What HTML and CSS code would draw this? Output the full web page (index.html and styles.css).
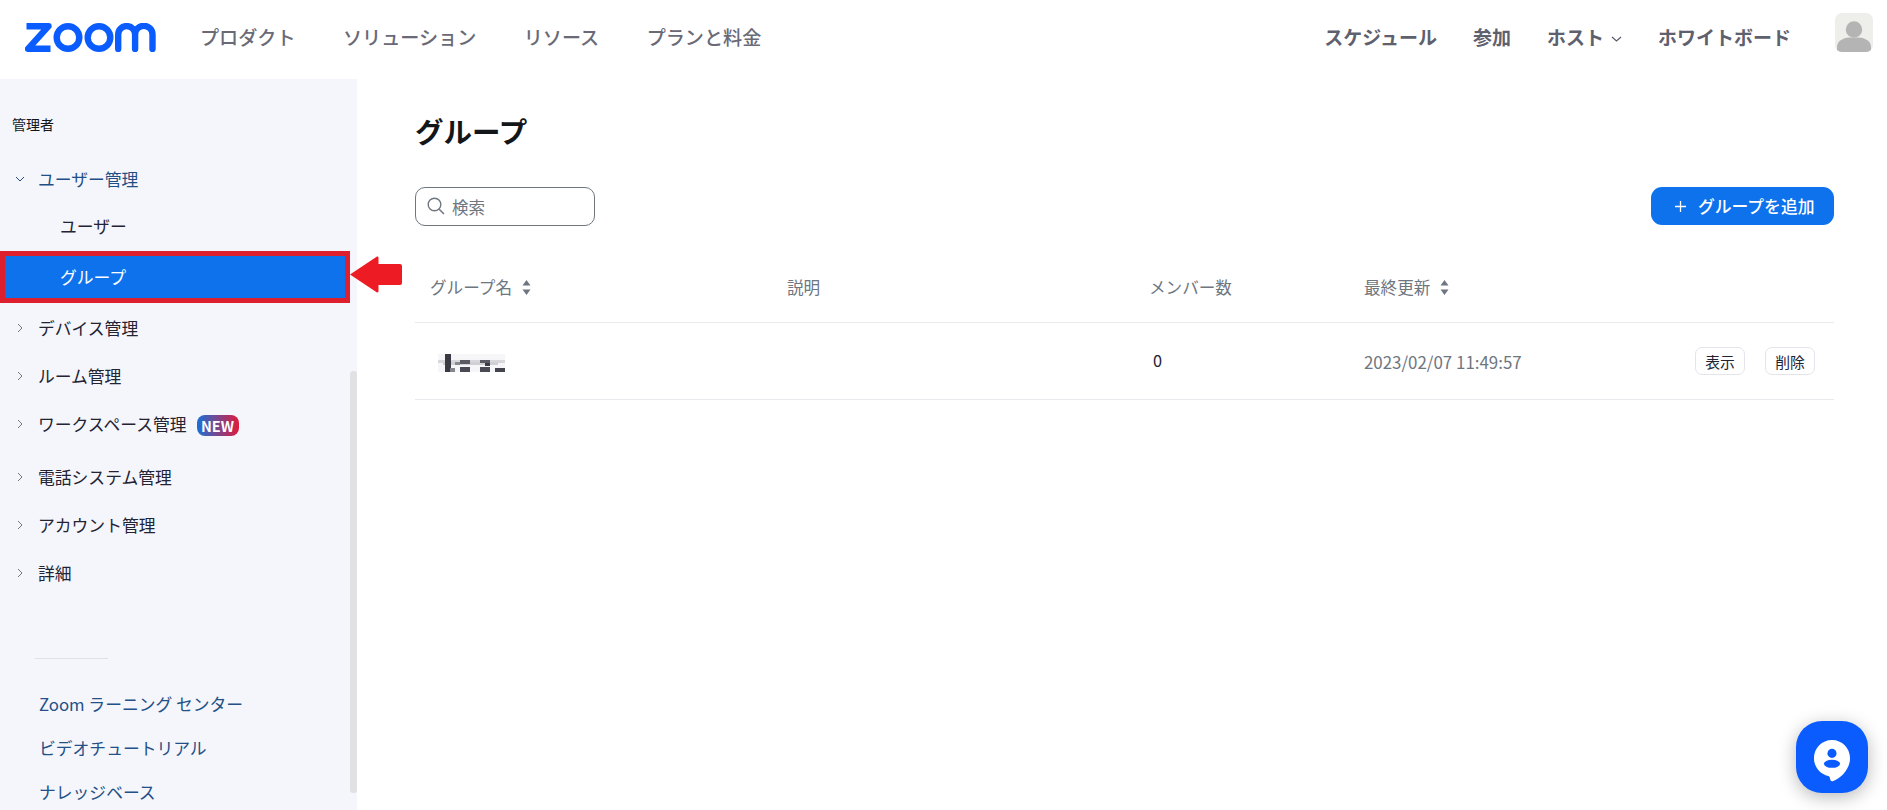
FILE: index.html
```html
<!DOCTYPE html>
<html lang="ja">
<head>
<meta charset="utf-8">
<title>グループ - Zoom</title>
<link rel="stylesheet" href="styles.css">
</head>
<body>
<header class="topbar">
  <svg class="logo" viewBox="0 0 131 29" aria-label="zoom">
    <g fill="none" stroke="#0b5cff" stroke-width="6.4">
      <path d="M1.5 3.2H23.5L3 25.8H25.5" stroke-linejoin="round"/>
      <circle cx="43" cy="14.5" r="11.3"/>
      <circle cx="74" cy="14.5" r="11.3"/>
      <path d="M93.2 26V11.5a8.4 8.4 0 0 1 16.9 0V26M110.1 11.5a8.4 8.4 0 0 1 17.4 0V26" stroke-linecap="round"/>
    </g>
  </svg>
  <nav class="nav-left">
    <a>プロダクト</a><a>ソリューション</a><a>リソース</a><a>プランと料金</a>
  </nav>
  <nav class="nav-right">
    <a>スケジュール</a><a>参加</a>
    <a class="has-caret">ホスト<svg class="caret" viewBox="0 0 11 6"><path d="M1 1l4.5 4L10 1" fill="none" stroke="#5a5b6a" stroke-width="1.2"/></svg></a>
    <a>ホワイトボード</a>
  </nav>
  <div class="avatar">
    <svg viewBox="0 0 38 39"><circle cx="19" cy="16.5" r="8.2" fill="#b4b4b4"/><path d="M2 39v-5c0-6 6-9 12-9.500h10c6 .5 12 3.500 12 9.500v5z" fill="#b4b4b4"/></svg>
  </div>
</header>

<div class="page">
  <aside class="sidebar">
    <div class="side-title">管理者</div>
    <ul class="menu">
      <li class="menu-item open"><svg class="chev" viewBox="0 0 10 10"><path d="M1 3l4 4 4-4" fill="none" stroke="#1f4f85" stroke-width="1"/></svg>ユーザー管理</li>
      <li class="sub-item">ユーザー</li>
      <li class="sub-item active">グループ
        <svg class="callout" viewBox="0 0 52 37"><path d="M0 18.500L27 .5q1.500-.5 1.500 1V8H50q2 0 2 2v17q0 2-2 2H28.500v6.500q0 1-1.500 1z" fill="#ed1c24"/></svg>
      </li>
      <li class="menu-item first-after"><svg class="chev" viewBox="0 0 10 10"><path d="M3 1l4 4-4 4" fill="none" stroke="#6e7680" stroke-width="1"/></svg>デバイス管理</li>
      <li class="menu-item"><svg class="chev" viewBox="0 0 10 10"><path d="M3 1l4 4-4 4" fill="none" stroke="#6e7680" stroke-width="1"/></svg>ルーム管理</li>
      <li class="menu-item"><svg class="chev" viewBox="0 0 10 10"><path d="M3 1l4 4-4 4" fill="none" stroke="#6e7680" stroke-width="1"/></svg>ワークスペース管理<span class="badge">NEW</span></li>
      <li class="menu-item spaced"><svg class="chev" viewBox="0 0 10 10"><path d="M3 1l4 4-4 4" fill="none" stroke="#6e7680" stroke-width="1"/></svg>電話システム管理</li>
      <li class="menu-item"><svg class="chev" viewBox="0 0 10 10"><path d="M3 1l4 4-4 4" fill="none" stroke="#6e7680" stroke-width="1"/></svg>アカウント管理</li>
      <li class="menu-item"><svg class="chev" viewBox="0 0 10 10"><path d="M3 1l4 4-4 4" fill="none" stroke="#6e7680" stroke-width="1"/></svg>詳細</li>
    </ul>
    <div class="side-rule"></div>
    <ul class="links">
      <li>Zoom ラーニング センター</li>
      <li>ビデオチュートリアル</li>
      <li>ナレッジベース</li>
    </ul>
    <div class="scroll-thumb"></div>
  </aside>

  <main class="content">
    <h1 class="title">グループ</h1>
    <div class="toolbar">
      <label class="search">
        <svg class="search-icon" viewBox="0 0 18 18"><circle cx="7.500" cy="7.500" r="6.300" fill="none" stroke="#6e7680" stroke-width="1.400"/><path d="M12.200 12.200L17 17" stroke="#6e7680" stroke-width="1.500"/></svg>
        <span>検索</span>
      </label>
      <button class="add-btn"><svg class="plus" viewBox="0 0 11 11"><path d="M5.500 0v11M0 5.500h11" stroke="#fff" stroke-width="1.300"/></svg>グループを追加</button>
    </div>
    <div class="row head">
      <div class="cell">グループ名<svg class="sort" viewBox="0 0 9 15"><path d="M4.500 0L8.500 5.500H.5zM4.500 15L.5 9.500H8.500z" fill="#6e7680"/></svg></div>
      <div class="cell">説明</div>
      <div class="cell">メンバー数</div>
      <div class="cell">最終更新<svg class="sort" viewBox="0 0 9 15"><path d="M4.500 0L8.500 5.500H.5zM4.500 15L.5 9.500H8.500z" fill="#6e7680"/></svg></div>
      <div class="cell"></div>
    </div>
    <div class="row body">
      <div class="cell">
        <svg class="mosaic" viewBox="0 0 67 19" role="img" aria-label="redacted">
          <rect x="0" y="0" width="67" height="18" fill="#f6f6f9"/>
          <rect x="0" y="6" width="67" height="3" fill="#d8d8dc"/>
          <rect x="5" y="8" width="55" height="3" fill="#cfcfd5"/>
          <rect x="7" y="0" width="6" height="18" fill="#3a3a44"/>
          <rect x="12" y="14" width="5" height="4" fill="#85858e"/>
          <rect x="17" y="8" width="5" height="3" fill="#8a8a92"/>
          <rect x="22" y="6" width="10" height="4" fill="#5a5a64"/>
          <rect x="22" y="13" width="10" height="5" fill="#4a4a54"/>
          <rect x="42" y="6" width="10" height="3" fill="#5a5a64"/>
          <rect x="47" y="9" width="5" height="3" fill="#3c3c46"/>
          <rect x="42" y="13" width="10" height="5" fill="#4a4a54"/>
          <rect x="57" y="14" width="10" height="4" fill="#44444e"/>
        </svg>
      </div>
      <div class="cell"></div>
      <div class="cell count">0</div>
      <div class="cell date">2023/02/07 11:49:57</div>
      <div class="cell actions"><button class="mini">表示</button><button class="mini">削除</button></div>
    </div>
  </main>
</div>

<button class="chat" aria-label="chat">
  <svg viewBox="0 0 40 46"><path d="M20 1C9.500 1 1 9.500 1 20c0 9 6.300 16.800 15 18.700 1.200.3 1.500 1 1.800 2.300.3 2 1 4 3 3.300C30 41 39 31 39 20 39 9.500 30.500 1 20 1z" fill="#fff"/><circle cx="20" cy="15" r="4.800" fill="#0b5cff"/><ellipse cx="20" cy="26" rx="8.500" ry="4.200" fill="#0b5cff"/></svg>
</button>
</body>
</html>
```
FILE: styles.css
```css
* { box-sizing: border-box; }
html, body { margin: 0; height: 810px; overflow: hidden; }
body {
  font-family: "Noto Sans CJK JP", "Noto Sans", sans-serif;
  color: #232333;
  background: #fff;
  position: relative;
}
ul { list-style: none; margin: 0; padding: 0; }

.topbar {
  height: 79px;
  display: flex;
  align-items: center;
  padding: 0 14px 5px 25px;
}
.logo { width: 131px; height: 29px; flex: none; }
.nav-left {
  display: flex;
  gap: 47.500px;
  margin-left: 44px;
  font-size: 19.100px;
  font-weight: 500;
  color: #6a6a77;
}
.nav-right {
  display: flex;
  align-items: center;
  gap: 36px;
  margin-left: auto;
  font-size: 19px;
  font-weight: 700;
  color: #5f606e;
  position: relative;
  top: -1px;
}
.has-caret { display: flex; align-items: center; }
.caret { width: 11px; height: 6px; margin-left: 7px; margin-top: 5px; }
.avatar {
  width: 38px;
  height: 39px;
  margin-left: 44px;
  margin-bottom: 9px;
  background: #eeeeea;
  border-radius: 7px;
  overflow: hidden;
}
.avatar svg { display: block; width: 38px; height: 39px; }

.page { display: flex; height: 731px; }
.sidebar {
  width: 357px;
  flex: none;
  background: #f5f6fb;
  padding: 35px 7px 0 0;
  position: relative;
}
.side-title {
  font-size: 14px;
  line-height: 20px;
  padding-left: 12px;
  color: #131619;
}
.menu { margin-top: 21px; }
.menu-item {
  height: 48px;
  display: flex;
  align-items: center;
  padding-left: 15px;
  font-size: 16.800px;
  color: #232333;
}
.menu-item.open { color: #1f4f85; }
.menu-item.first-after { margin-top: 1px; }
.menu-item.spaced { margin-top: 5px; }
.chev { width: 10px; height: 10px; margin-right: 13px; flex: none; }
.sub-item {
  height: 47px;
  display: flex;
  align-items: center;
  padding-left: 60px;
  font-size: 16.800px;
  color: #232333;
  padding-bottom: 1px;
}
.sub-item.active {
  height: 52px;
  padding-left: 55px;
  padding-bottom: 0;
  background: #0e72ed;
  border: 5px solid #de1f2d;
  color: #fff;
  position: relative;
  margin-top: 1px;
}
.callout {
  position: absolute;
  left: 100%;
  top: 0;
  margin-left: 5px;
  width: 52px;
  height: 37px;
}
.badge {
  width: 42px;
  height: 21px;
  margin-left: 10px;
  margin-top: 3px;
  border-radius: 8px;
  background: linear-gradient(90deg, #1a6fd8, #e01a3c);
  color: #fff;
  font-size: 14.500px;
  font-weight: 700;
  line-height: 21px;
  text-align: center;
}
.side-rule {
  width: 73px;
  height: 1px;
  margin: 61px 0 0 35px;
  background: #dfe1e8;
}
.links { margin-top: 23px; padding-left: 39px; }
.links li {
  height: 44px;
  display: flex;
  align-items: center;
  font-size: 16.800px;
  color: #235087;
}
.scroll-thumb {
  position: absolute;
  left: 350px;
  top: 292px;
  width: 7px;
  height: 422px;
  background: #e1e1e3;
  border-radius: 3px;
}

.content {
  flex: 1;
  min-width: 0;
  padding: 32px 53px 0 58px;
}
.title {
  margin: 0;
  font-size: 28.500px;
  line-height: 40px;
  font-weight: 700;
  color: #131619;
}
.toolbar {
  display: flex;
  justify-content: space-between;
  margin-top: 36px;
}
.search {
  width: 180px;
  height: 39px;
  display: flex;
  align-items: center;
  padding-left: 11px;
  border: 1px solid #6e7680;
  border-radius: 10px;
  font-size: 16.500px;
  color: #6e7680;
}
.search-icon { width: 18px; height: 18px; margin-right: 7px; margin-top: -2px; }
.add-btn {
  width: 183px;
  height: 38px;
  display: flex;
  align-items: center;
  padding: 0 0 0 24px;
  border: 0;
  border-radius: 11px;
  background: #0e72ed;
  color: #fff;
  font: 500 16.800px "Noto Sans CJK JP", sans-serif;
}
.plus { width: 11px; height: 11px; margin-right: 12px; }

.row {
  display: grid;
  grid-template-columns: 357px 362px 215px 1fr 280px;
  align-items: center;
  border-bottom: 1px solid #e9eaee;
}
.row.head {
  height: 71px;
  margin-top: 26px;
  font-size: 16.600px;
  color: #6e7680;
}
.row.body { height: 77px; font-size: 16.300px; }
.cell { padding-left: 15px; display: flex; align-items: center; }
.sort { width: 9px; height: 15px; margin-left: 10px; }
.mosaic { width: 67px; height: 19px; margin: 4px 0 0 8px; }
.count { padding-left: 19px; color: #232333; font-weight: 400; padding-bottom: 2px; }
.date { font-size: 16.900px; color: #6e7680; white-space: nowrap; }
.actions { justify-content: flex-end; gap: 20px; padding-right: 19px; }
.mini {
  width: 50px;
  height: 28px;
  padding: 0;
  border: 1px solid #e3e5ea;
  border-radius: 7px;
  background: #fff;
  color: #232333;
  font: 14.800px "Noto Sans CJK JP", sans-serif;
}
.chat {
  position: absolute;
  left: 1796px;
  top: 721px;
  width: 72px;
  height: 72px;
  padding: 0;
  border: 0;
  border-radius: 26px;
  background: #0b5cff;
  box-shadow: 0 4px 18px rgba(0, 0, 0, .28);
  display: flex;
  align-items: center;
  justify-content: center;
}
.chat svg { width: 38px; height: 44px; margin-top: 8px; }
```
